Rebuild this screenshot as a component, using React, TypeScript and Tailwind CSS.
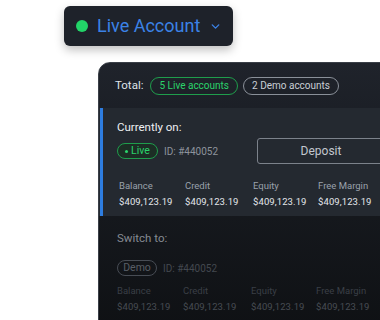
import { ChevronDown } from "lucide-react";

const stats = ["Balance", "Credit", "Equity", "Free Margin"];
const amount = "$409,123.19";

function StatRow({ dim }: { dim?: boolean }) {
  return (
    <div className="grid grid-cols-[66px_68px_65px_80px] whitespace-nowrap leading-[13px]">
      {stats.map((s) => (
        <div key={s} className="flex flex-col gap-[3px]">
          <span className={"text-[9.5px] " + (dim ? "text-[#3a3f46]" : "text-[#9aa1ab]")}>{s}</span>
          <span className={"text-[9.5px] tracking-[0.1px] " + (dim ? "text-[#474c53]" : "text-[#e3e6ea]")}>
            {amount}
          </span>
        </div>
      ))}
    </div>
  );
}

export default function App() {
  return (
    <div className="relative h-[320px] w-[380px] overflow-hidden bg-white font-['Roboto',sans-serif]">
      <div className="ml-[64px] mt-[6px] flex h-[40px] w-[169px] items-center rounded-[6px] bg-[#1e222a] pl-[12px] shadow-[0_4px_10px_rgba(0,0,0,0.25)]">
        <span className="h-[12px] w-[12px] rounded-full bg-[#22d468]" />
        <span className="ml-[9px] whitespace-nowrap text-[18px] leading-none text-[#3b82e6]">Live Account</span>
        <ChevronDown size={13} strokeWidth={2.5} className="ml-[9px] text-[#3b82e6]" />
      </div>

      <div className="ml-[98px] mt-[16px] h-[280px] w-[320px] overflow-hidden rounded-tl-[12px] border border-[#3a3f47] bg-gradient-to-b from-[#1f232b] via-[#16191e] to-[#0e1013] whitespace-nowrap">
        <div className="flex h-[45px] items-center gap-[5px] pl-[16px]">
          <span className="mr-[2px] text-[11.5px] text-[#dfe3e8]">Total:</span>
          <span className="flex h-[18px] items-center rounded-full border border-[#1f9d4c] px-[8px] text-[10px] text-[#2bd36b]">
            5 Live accounts
          </span>
          <span className="flex h-[18px] items-center rounded-full border border-[#8a9099] px-[8px] text-[10px] text-[#c9ced5]">
            2 Demo accounts
          </span>
        </div>

        <div className="flex h-[108px] bg-[#242930]">
          <div className="ml-[1px] w-[3px] shrink-0 bg-[#2e7de0]" />
          <div className="flex flex-1 flex-col pl-[14px] pt-[12px]">
            <span className="text-[11.5px] leading-[14px] text-[#eef0f3]">Currently on:</span>
            <div className="mt-[4px] flex h-[26px] items-center">
              <span className="flex h-[16px] w-[41px] shrink-0 items-center justify-center gap-[3px] rounded-full border border-[#1f9d4c] bg-[#1c2e25] text-[10.5px] text-[#2bd36b]">
                <span className="h-[3px] w-[3px] rounded-full bg-[#2bd36b]" />
                Live
              </span>
              <span className="ml-[6px] w-[93px] shrink-0 text-[10px] text-[#8d939c]">ID: #440052</span>
              <div className="flex h-[26px] w-[140px] shrink-0 items-center justify-center rounded-[3px] border border-[#7c828b] text-[12px] text-[#c2c7ce]">
                <span className="-ml-[12px]">Deposit</span>
              </div>
            </div>
            <div className="mt-[15px] pl-[2px]">
              <StatRow />
            </div>
          </div>
        </div>

        <div className="flex flex-col pl-[18px] pt-[15px]">
          <span className="text-[11.5px] leading-[14px] text-[#858a92]">Switch to:</span>
          <div className="mt-[15px] flex h-[16px] items-center">
            <span className="flex h-[16px] w-[40px] items-center justify-center rounded-full border border-[#474c54] text-[10.5px] text-[#585e66]">
              Demo
            </span>
            <span className="ml-[6px] text-[10px] text-[#43484f]">ID: #440052</span>
          </div>
          <div className="mt-[8px]">
            <StatRow dim />
          </div>
        </div>
      </div>
    </div>
  );
}
